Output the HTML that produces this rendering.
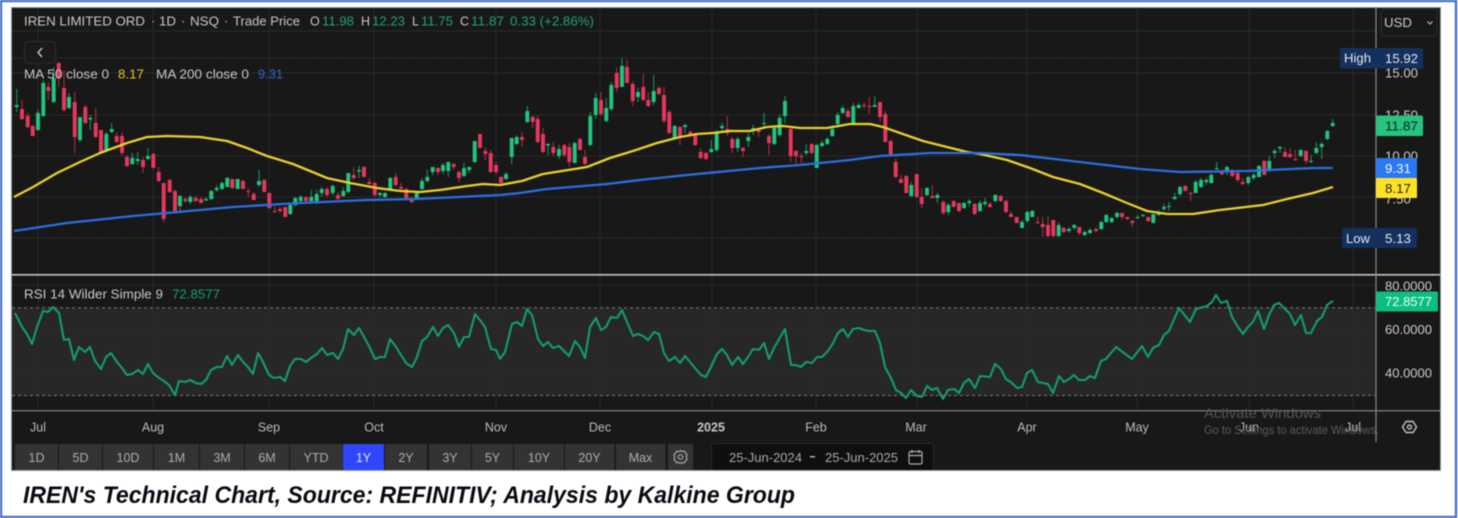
<!DOCTYPE html>
<html><head><meta charset="utf-8"><title>IREN Technical Chart</title>
<style>
html,body{margin:0;padding:0;background:#fff;width:1458px;height:518px;overflow:hidden}
svg{display:block;filter:blur(0.5px)}
text{font-family:"Liberation Sans",sans-serif;font-size:12.5px;fill:#c8c8c8}
.g{fill:#1fa56e}.ax{fill:#cccccc;font-size:12.5px}.b{fill:#bbbbbb;font-size:12.5px}.btn{fill:#adadad;font-size:12.5px;text-anchor:middle}
</style></head><body>
<svg width="1458" height="518" viewBox="0 0 1458 518" xmlns="http://www.w3.org/2000/svg">
<rect width="1458" height="518" fill="#fff"/>
<rect x="1" y="1" width="1455" height="516" fill="none" stroke="#4472c4" stroke-width="2.4"/>
<rect x="11.5" y="7.5" width="1429" height="463" fill="#181818" stroke="#999" stroke-width="1"/>
<rect x="12" y="8" width="1428" height="462" fill="#181818"/>

<rect x="12" y="307.7" width="1364" height="88" fill="#272727"/>
<!-- grid -->
<path d="M12 31H1376M12 73H1376M12 115H1376M12 156H1376M12 197H1376M12 285H1376M12 329.3H1376M12 373.3H1376" stroke="#2a2a2a" stroke-width="1" fill="none"/>
<path d="M38 8V411M153 8V411M269 8V411M374 8V411M496 8V411M600 8V411M712 8V411M816 8V411M917 8V411M1027 8V411M1137 8V411M1249 8V411M1353 8V411" stroke="#282828" stroke-width="1" fill="none"/>
<path d="M12 58H1376M12 238H1376" stroke="#333" stroke-width="1" stroke-dasharray="2 1" fill="none"/>
<path d="M12 307.7H1376M12 395.5H1376" stroke="#7a7a7a" stroke-width="1" stroke-dasharray="3 3" fill="none"/>

<!-- wicks green -->
<path fill="none" stroke="#1b8f60" stroke-width="1.1" d="M16.7 89V112M38 110V131M43.3 80V117M53.7 67V103M69 93V109M80 117V142M90.3 115V130M106.3 132V152M111.7 123V133M132.3 153V165M137.7 152V165M148 148V160M180 195V211M190.3 195V204M206 197V201M211.3 190V200M216.7 185V192M222 182V190M227.3 177V187M237.7 179V189M259 170V187M290.3 204V215M295.3 197V206M300.7 195V203M311.3 190V202M316.7 190V204M321.7 187V197M332.7 185V195M343.3 187V197M348.3 173V193M359 166V178M380 192V197M385 192V198M390.3 177V190M416.7 193V200M422 178V190M427.3 170V183M432.7 167V175M443 163V174M448.3 162V177M464 163V177M469.3 167V173M474.7 141V163M506 172V180M511.7 138V164M516.7 135V145M527.3 106V123M548 143V155M559 145V159M574.7 142V163M590.3 112V146M595.7 93V119M606.3 98V122M611.3 82V111M622 58V87M638 88V102M653.7 75V105M674.7 125V138M685 124V133M711.3 140V153M716.7 130V152M722 123V131M737.7 137V152M748.3 133V147M753.3 125V135M764 113V127M774.3 125V145M779.7 115V137M785 96V123M806.3 144V155M816.7 144V168M822 140V147M827.3 137V145M832.3 125V137M837.7 112V125M842.7 105V114M853.3 103V123M858.7 103V109M874.7 96V107M911.3 182V197M927 187V196M937.3 193V203M948.3 203V215M964 202V209M969.3 199V207M980 200V212M985 198V206M995.3 194V202M1022 220V228M1027.3 211V223M1032.3 210V217M1058.7 222V237M1069 227V233M1074.3 224V230M1084.7 231V236M1090 228V234M1101.3 221V230M1106.3 214V223M1111.7 217V223M1117 212V219M1137.7 215V219M1143 214V217M1153.3 214V223M1158.7 210V216M1164 204V211M1169 202V211M1174.7 193V200M1180 186V196M1195.7 180V193M1201 178V188M1206.3 178V185M1211.3 173V184M1216.7 162V170M1227 166V175M1248.3 176V185M1253.7 173V180M1259 165V177M1269.3 156V172M1274.7 149V158M1280 146V153M1300.7 149V157M1311 155V163M1316.3 142V154M1321.7 142V159M1327.3 130V140M1332.7 119V127"/>
<!-- wicks red -->
<path fill="none" stroke="#a62d48" stroke-width="1.1" d="M22 100V120M27.7 113V128M32.7 125V136M48.3 82V100M58.7 62V87M64 70V112M74.7 92V153M85.3 105V124M95.7 108V138M101 130V153M116.7 132V143M122 132V155M127 155V167M143 157V173M153.3 153V168M158.7 167V182M163.7 183V222M169.7 179V193M175 190V212M185.3 197V203M195.7 196V202M201 197V203M232.3 179V189M243 180V189M248.3 188V197M253.7 192V200M264.3 179V192M269.3 193V209M274.7 207V213M280 207V213M285.3 207V217M306 197V202M327 187V197M338 192V199M353.7 167V180M364 166V177M369.3 178V185M374.7 182V197M395.7 173V187M401 183V192M406.3 188V199M411.7 197V203M438 167V175M453.7 163V170M459 170V182M480 134V148M485.3 147V160M490.7 150V173M496 162V175M501 176V183M522 132V147M532.7 116V128M537.7 116V143M543 128V153M553.3 142V156M564.3 144V157M569.3 143V167M580 138V150M585 150V165M601 92V116M616.7 68V92M627 60V83M632.7 81V106M643.3 74V101M648.3 92V107M659 86V95M664 87V123M669.3 110V134M680 126V145M690.3 130V137M695.3 133V146M700.7 148V159M706 152V160M727.3 116V136M732.3 137V153M743 147V157M758.7 128V137M769 134V155M790.7 128V162M796 150V166M801.3 153V163M811.7 143V154M848 108V118M864 102V109M869.3 97V114M880 102V122M885.3 111V142M890.7 140V155M895.7 158V178M901 175V183M906.3 175V193M916.7 174V198M921.7 188V208M932.3 185V198M943.3 200V215M953.7 200V207M959 203V212M974.7 203V215M990 202V208M1000.7 195V202M1006 200V213M1011 211V217M1016.7 217V223M1037.7 217V224M1042.7 217V237M1048 216V237M1053.3 220V237M1063.7 227V233M1079.3 227V235M1096 227V232M1122 213V220M1127.3 217V220M1132.3 220V227M1148.3 217V222M1185.3 185V191M1190.7 192V201M1222 170V176M1232.3 169V177M1237.7 172V182M1242.7 178V185M1264.3 160V175M1285 147V157M1290 148V158M1295.3 150V161M1306 150V164"/>
<!-- bodies green -->
<path fill="none" stroke="#22c47e" stroke-width="3.9" d="M16.7 105V107M38 113V130M43.3 83V116M53.7 78V102M69 97V108M80 117V140M90.3 118V119.5M106.3 134V150M111.7 129V132M132.3 158V164M137.7 159V161M148 156V159M180 196V206M190.3 197V202M206 199V200.5M211.3 191V199M216.7 188V190M222 183V189M227.3 178V187M237.7 179V189M259 181V185M290.3 205V214M295.3 198V205M300.7 197V201M311.3 197V201M316.7 194V203M321.7 189V193M332.7 186V193M343.3 191V196M348.3 173V192M359 170V171.5M380 193V195M385 193V197M390.3 178V189M416.7 193V199M422 181V189M427.3 177V181M432.7 167V172M443 165V171M448.3 162V171M464 168V176M469.3 167V170M474.7 141V162M506 174V179M511.7 138V157M516.7 137V144M527.3 111V122M548 144V145.5M559 149V156M574.7 143V163M590.3 116V145M595.7 98V115M606.3 108V121M611.3 85V109M622 66V87M638 92V97M653.7 91V102M674.7 126V138M685 125V127M711.3 149V152M716.7 133V150M722 126V128M737.7 139V148M748.3 137V141M753.3 128V131M764 123V124M774.3 128V144M779.7 118V135M785 101V116M806.3 151V153M816.7 145V168M822 143V146M827.3 139V144M832.3 129V136M837.7 115V124M842.7 108V113M853.3 106V123M858.7 105V108M874.7 105V107M911.3 185V196M927 188V195M937.3 195V198M948.3 205V212M964 203V208M969.3 201V203M980 203V211M985 202V204M995.3 195V201M1022 222V228M1027.3 212V221M1032.3 211V217M1058.7 225V236M1069 229V231M1074.3 225V228M1084.7 232V235M1090 230V233M1101.3 222V229M1106.3 215V222M1111.7 218V222M1117 213V217M1137.7 217V218M1143 215V216M1153.3 214V223M1158.7 213V215M1164 207V209M1169 206V207M1174.7 197V199M1180 187V194M1195.7 182V193M1201 180V187M1206.3 180V182M1211.3 175V183M1216.7 168V169M1227 167V172M1248.3 177V183M1253.7 175V178M1259 166V177M1269.3 161V171M1274.7 151V153M1280 147V148.5M1300.7 150V156M1311 161V162M1316.3 148V153M1321.7 144V147M1327.3 131V139M1332.7 123V126"/>
<!-- bodies red -->
<path fill="none" stroke="#e8375c" stroke-width="3.9" d="M22 109V119M27.7 116V127M32.7 126V136M48.3 87V91M58.7 63V78M64 88V110M74.7 102V137M85.3 107V123M95.7 123V137M101 130V153M116.7 136V142M122 136V153M127 157V166M143 160V167M153.3 154V168M158.7 172V181M163.7 183V219M169.7 180V192M175 191V211M185.3 199V201M195.7 198V201M201 199V203M232.3 179V188M243 181V189M248.3 191V192M253.7 194V200M264.3 180V192M269.3 193V208M274.7 211V212M280 209V211M285.3 207V217M306 197V201M327 189V195M338 195V199M353.7 175V178M364 167V177M369.3 182V184M374.7 183V195M395.7 177V185M401 187V189M406.3 189V198M411.7 199V202M438 168V172M453.7 164V167M459 172V178M480 134V148M485.3 151V154M490.7 153V172M496 165V172M501 177V183M522 137V140M532.7 117V122M537.7 119V142M543 134V152M553.3 147V153M564.3 145V155M569.3 147V162M580 139V150M585 157V164M601 100V114M616.7 73V88M627 67V83M632.7 84V101M643.3 87V100M648.3 100V106M659 88V94M664 95V121M669.3 112V133M680 127V137M690.3 132V135M695.3 135V145M700.7 152V158M706 153V159M727.3 129V133M732.3 139V148M743 148V151M758.7 129V132M769 136V143M790.7 129V156M796 151V156M801.3 156V157M811.7 144V153M848 111V117M864 105V106M869.3 106V107M880 102V117M885.3 114V142M890.7 141V155M895.7 162V177M901 179V183M906.3 176V193M916.7 174V197M921.7 197V204M932.3 196V198M943.3 202V213M953.7 201V207M959 203V211M974.7 204V214M990 204V207M1000.7 196V201M1006 201V212M1011 214V217M1016.7 217V223M1037.7 222V223M1042.7 224V227M1048 225V236M1053.3 220V236M1063.7 228V232M1079.3 227V233M1096 229V231M1122 213V217M1127.3 217V219M1132.3 221V223M1148.3 217V221M1185.3 186V191M1190.7 193V194M1222 171V174M1232.3 170V176M1237.7 173V180M1242.7 182V184M1264.3 161V175M1285 152V157M1290 154V157M1295.3 159V160M1306 151V161"/>

<!-- MA lines -->
<path fill="none" stroke="#e8d02a" stroke-width="2.3" stroke-linejoin="round" d="M14 197L33 187L57 173L80 162L100 153L127 143L147 137L167 136L200 137L227 141L247 148L267 156L293 164L310 171L327 178L350 183L377 188L400 191L420 192L440 190L467 186L483 184L500 185L522 181L543 174L587 167L610 158L633 151L657 143L680 137L697 134L713 133L730 131L750 131L767 127L783 126L800 128L827 128L850 124L870 124L883 127L900 133L923 141L947 147L967 152L980 154L1007 160L1030 168L1053 177L1080 184L1103 193L1127 203L1147 211L1167 214L1193 214L1220 210L1263 205L1287 199L1313 193L1333 187"/>
<path fill="none" stroke="#2a6fe0" stroke-width="2.3" stroke-linejoin="round" d="M14 231L67 223L133 216L167 213L233 207L300 203L367 200L417 199L500 195L520 193L547 189L607 184L640 180L687 175L760 168L800 165L850 160L880 156L930 153L980 153L1020 155L1080 162L1140 169L1180 172L1247 171L1313 168L1333 168"/>

<!-- RSI -->
<path fill="none" stroke="#129c70" stroke-width="2.1" stroke-linejoin="round" d="M15 313L22 327L27 334L32 344L37 327L43 311L48 312L53 307L59 313L64 340L69 339L74 360L79 347L85 352L90 347L95 361L101 369L106 357L111 353L117 362L122 368L127 375L132 374L138 370L143 374L148 364L153 373L159 378L164 381L169 385L175 395L179 381L185 382L190 380L196 383L201 384L206 380L211 370L217 367L222 367L227 356L232 365L238 355L243 362L248 367L253 374L258 353L263 362L269 375L274 378L280 377L285 381L290 366L295 359L301 359L306 362L311 358L317 354L322 348L327 355L333 353L338 359L343 349L348 329L354 335L359 328L364 337L369 346L375 359L380 357L385 357L390 339L396 347L401 355L406 363L412 367L417 357L422 341L427 337L433 327L438 336L443 328L448 325L454 333L459 347L464 337L469 337L475 314L480 320L485 327L491 349L496 350L500 359L505 352L512 324L517 322L522 326L527 309L532 315L538 339L543 346L548 342L553 348L559 346L564 351L569 356L575 341L580 347L585 358L590 327L596 318L601 330L606 327L611 317L617 318L622 310L627 322L633 336L638 334L643 336L648 340L654 332L659 334L664 353L669 361L675 357L680 363L685 356L690 362L695 368L701 375L706 377L711 367L717 354L722 349L727 355L732 365L738 357L743 364L748 357L753 349L759 350L764 343L769 359L774 348L785 329L791 365L796 365L801 367L806 362L812 363L817 357L822 357L827 352L832 345L838 333L843 329L848 337L853 329L859 328L864 330L869 331L875 331L880 343L885 367L891 378L896 390L901 393L906 398L911 390L917 396L922 397L927 386L932 390L937 388L943 399L948 390L954 389L959 393L964 383L969 379L975 388L980 376L990 377L995 364L1001 369L1006 379L1012 383L1017 388L1022 387L1027 373L1032 370L1038 382L1043 383L1048 384L1053 393L1059 376L1064 382L1069 379L1074 375L1079 380L1085 380L1090 376L1095 378L1101 361L1106 359L1116 347L1132 359L1142 346L1148 357L1153 348L1159 345L1164 335L1169 331L1179 308L1190 322L1196 309L1207 306L1212 302L1216 295L1221 303L1227 301L1232 317L1238 327L1243 334L1248 327L1253 322L1258 311L1264 329L1269 315L1274 305L1279 303L1285 309L1290 314L1295 325L1301 315L1306 333L1311 333L1317 321L1322 317L1327 305L1333 301"/>

<!-- dividers -->
<rect x="12" y="274" width="1428" height="1.6" fill="#c4c4c4"/>
<rect x="12" y="410.2" width="1428" height="1.1" fill="#8e8e8e"/>
<rect x="1375.4" y="8" width="1.2" height="434" fill="#8a8a8a"/>

<!-- header -->
<text x="24" y="25.5" textLength="121" lengthAdjust="spacingAndGlyphs">IREN LIMITED ORD</text>
<text x="151" y="25.5">·</text>
<text x="159" y="25.5" textLength="17" lengthAdjust="spacingAndGlyphs">1D</text>
<text x="181" y="25.5">·</text>
<text x="190" y="25.5" textLength="29" lengthAdjust="spacingAndGlyphs">NSQ</text>
<text x="224" y="25.5">·</text>
<text x="233" y="25.5" textLength="67" lengthAdjust="spacingAndGlyphs">Trade Price</text>
<text x="310" y="25.5">O</text><text x="322" y="25.5" class="g" textLength="32" lengthAdjust="spacingAndGlyphs">11.98</text>
<text x="361" y="25.5">H</text><text x="372" y="25.5" class="g" textLength="33" lengthAdjust="spacingAndGlyphs">12.23</text>
<text x="412" y="25.5">L</text><text x="421" y="25.5" class="g" textLength="32" lengthAdjust="spacingAndGlyphs">11.75</text>
<text x="460" y="25.5">C</text><text x="471" y="25.5" class="g" textLength="33" lengthAdjust="spacingAndGlyphs">11.87</text>
<text x="510" y="25.5" class="g" textLength="84" lengthAdjust="spacingAndGlyphs">0.33 (+2.86%)</text>

<!-- back button -->
<rect x="24.5" y="41.5" width="31" height="22" rx="3" fill="#1a1a1a" stroke="#2d2d2d"/>
<path d="M42 48L38 52.5L42 57" fill="none" stroke="#c8c8c8" stroke-width="1.4"/>

<!-- MA legend -->
<text x="24" y="78.5" textLength="85" lengthAdjust="spacingAndGlyphs">MA 50 close 0</text>
<text x="118" y="78.5" style="fill:#e2c52a" textLength="26" lengthAdjust="spacingAndGlyphs">8.17</text>
<text x="156" y="78.5" textLength="93" lengthAdjust="spacingAndGlyphs">MA 200 close 0</text>
<text x="258" y="78.5" style="fill:#2e68cc" textLength="25" lengthAdjust="spacingAndGlyphs">9.31</text>

<!-- USD -->
<rect x="1381" y="9" width="56" height="27" rx="3" fill="#181818" stroke="#2c2c2c"/>
<text x="1384" y="27" style="font-size:13px;fill:#ccc" textLength="28" lengthAdjust="spacingAndGlyphs">USD</text>
<path d="M1427.5 21.5L1430 24L1432.5 21.5" fill="none" stroke="#bbb" stroke-width="1.2"/>

<!-- price axis -->
<text x="1385" y="77.5" class="ax" textLength="33" lengthAdjust="spacingAndGlyphs">15.00</text>
<text x="1385" y="119.5" class="ax" textLength="33" lengthAdjust="spacingAndGlyphs">12.50</text>
<text x="1385" y="160.5" class="ax" textLength="33" lengthAdjust="spacingAndGlyphs">10.00</text>
<text x="1385" y="203.5" class="ax" textLength="26" lengthAdjust="spacingAndGlyphs">7.50</text>

<rect x="1340" y="48" width="83" height="20.5" rx="2" fill="#14305f"/>
<text x="1344" y="62.5" style="fill:#e4e8ef" textLength="27" lengthAdjust="spacingAndGlyphs">High</text>
<text x="1385" y="63" style="fill:#e4e8ef" textLength="33" lengthAdjust="spacingAndGlyphs">15.92</text>
<rect x="1376" y="115.5" width="47" height="20.5" rx="1.5" fill="#26c47c"/>
<text x="1385" y="130.5" style="fill:#123" textLength="33" lengthAdjust="spacingAndGlyphs">11.87</text>
<rect x="1376" y="158" width="41" height="20" fill="#2a78f2"/>
<text x="1385" y="173" style="fill:#f2f6ff" textLength="26" lengthAdjust="spacingAndGlyphs">9.31</text>
<rect x="1376" y="178" width="41" height="20" rx="1" fill="#ffe226"/>
<text x="1385" y="193" style="fill:#222" textLength="26" lengthAdjust="spacingAndGlyphs">8.17</text>
<rect x="1342" y="228" width="75" height="20" rx="2" fill="#14305f"/>
<text x="1346" y="243" style="fill:#e4e8ef" textLength="24" lengthAdjust="spacingAndGlyphs">Low</text>
<text x="1385" y="243" style="fill:#e4e8ef" textLength="26" lengthAdjust="spacingAndGlyphs">5.13</text>

<!-- RSI legend & axis -->
<text x="24" y="298.5" textLength="139" lengthAdjust="spacingAndGlyphs">RSI 14 Wilder Simple 9</text>
<text x="172" y="298.5" style="fill:#10a074" textLength="48" lengthAdjust="spacingAndGlyphs">72.8577</text>
<text x="1385" y="290.5" class="ax" textLength="47" lengthAdjust="spacingAndGlyphs">80.0000</text>
<rect x="1376" y="291.5" width="62" height="20" rx="1.5" fill="#0cbd84"/>
<text x="1385" y="306" style="fill:#eefcf6" textLength="47" lengthAdjust="spacingAndGlyphs">72.8577</text>
<text x="1385" y="334" class="ax" textLength="47" lengthAdjust="spacingAndGlyphs">60.0000</text>
<text x="1385" y="377.5" class="ax" textLength="47" lengthAdjust="spacingAndGlyphs">40.0000</text>

<!-- Activate Windows -->
<text x="1204" y="418" style="font-size:14px;fill:#565656" textLength="117" lengthAdjust="spacingAndGlyphs">Activate Windows</text>

<!-- time axis -->
<text x="38" y="431.5" class="b" text-anchor="middle">Jul</text>
<text x="153" y="431.5" class="b" text-anchor="middle">Aug</text>
<text x="269" y="431.5" class="b" text-anchor="middle">Sep</text>
<text x="374" y="431.5" class="b" text-anchor="middle">Oct</text>
<text x="496" y="431.5" class="b" text-anchor="middle">Nov</text>
<text x="600" y="431.5" class="b" text-anchor="middle">Dec</text>
<text x="711" y="431.5" class="b" text-anchor="middle" style="font-weight:bold;fill:#c8c8c8">2025</text>
<text x="816" y="431.5" class="b" text-anchor="middle">Feb</text>
<text x="916" y="431.5" class="b" text-anchor="middle">Mar</text>
<text x="1027" y="431.5" class="b" text-anchor="middle">Apr</text>
<text x="1137" y="431.5" class="b" text-anchor="middle">May</text>
<text x="1249" y="431.5" class="b" text-anchor="middle">Jun</text>
<text x="1353" y="431.5" class="b" text-anchor="middle">Jul</text>
<text x="1204" y="434" style="font-size:11.5px;fill:#5c5c5c" textLength="175" lengthAdjust="spacingAndGlyphs">Go to Settings to activate Windows.</text>
<path d="M1402.5 427L1406 421.5H1413L1416.5 427L1413 432.500H1406Z" fill="none" stroke="#c0c0c0" stroke-width="1.4"/>
<circle cx="1409.5" cy="427" r="2" fill="none" stroke="#c0c0c0" stroke-width="1.4"/>

<!-- range buttons -->
<g fill="#333333">
<rect x="15" y="444" width="43" height="26"/><rect x="59" y="444" width="43" height="26"/><rect x="103" y="444" width="50" height="26"/><rect x="154" y="444" width="45" height="26"/><rect x="200" y="444" width="44" height="26"/><rect x="245" y="444" width="44" height="26"/><rect x="290" y="444" width="52.5" height="26"/>
<rect x="343" y="444" width="41" height="26" fill="#2f46fa"/>
<rect x="385" y="444" width="42" height="26"/><rect x="429" y="444" width="42" height="26"/><rect x="472" y="444" width="41" height="26"/><rect x="514" y="444" width="50" height="26"/><rect x="565" y="444" width="49.5" height="26"/><rect x="616" y="444" width="49.5" height="26"/><rect x="668" y="444" width="25" height="26"/>
</g>
<text x="36.5" y="462" class="btn">1D</text>
<text x="80.5" y="462" class="btn">5D</text>
<text x="128" y="462" class="btn">10D</text>
<text x="176.5" y="462" class="btn">1M</text>
<text x="222" y="462" class="btn">3M</text>
<text x="267" y="462" class="btn">6M</text>
<text x="316" y="462" class="btn">YTD</text>
<text x="363.5" y="462" class="btn" style="fill:#dfe3ff">1Y</text>
<text x="406" y="462" class="btn">2Y</text>
<text x="450" y="462" class="btn">3Y</text>
<text x="492.5" y="462" class="btn">5Y</text>
<text x="539" y="462" class="btn">10Y</text>
<text x="589.5" y="462" class="btn">20Y</text>
<text x="640.5" y="462" class="btn">Max</text>
<circle cx="680.5" cy="457" r="2.3" fill="none" stroke="#a8a8a8" stroke-width="1.2"/>
<path d="M680.5 450.5L682.3 451.6L684.4 451.2L685.4 453L687 454.500L686.4 457L687 459.500L685.4 461L684.4 462.800L682.3 462.400L680.5 463.500L678.700 462.400L676.600 462.800L675.600 461L674 459.500L674.600 457L674 454.500L675.600 453L676.600 451.200L678.700 451.600Z" fill="none" stroke="#a8a8a8" stroke-width="1.2"/>

<!-- date box -->
<rect x="711.5" y="443.5" width="222" height="27" rx="1" fill="#0f0f0f" stroke="#2a2a2a"/>
<text x="729" y="462" style="fill:#a8a8a8" textLength="73" lengthAdjust="spacingAndGlyphs">25-Jun-2024</text>
<rect x="810" y="456" width="5" height="1.5" fill="#b0b0b0"/>
<text x="825" y="462" style="fill:#a8a8a8" textLength="73" lengthAdjust="spacingAndGlyphs">25-Jun-2025</text>
<rect x="909" y="451.5" width="13" height="12.5" rx="1.5" fill="none" stroke="#aaa" stroke-width="1.2"/>
<path d="M909 455.500H922M912 450V453M919 450V453" fill="none" stroke="#aaa" stroke-width="1.2"/>

<rect x="12" y="470" width="1428.5" height="1" fill="#9a9a9a"/>

<!-- caption -->
<text x="23" y="503" style="font-size:24.5px;font-weight:bold;font-style:italic;fill:#0a0a14" textLength="772" lengthAdjust="spacingAndGlyphs">IREN's Technical Chart, Source: REFINITIV; Analysis by Kalkine Group</text>
</svg>
</body></html>
